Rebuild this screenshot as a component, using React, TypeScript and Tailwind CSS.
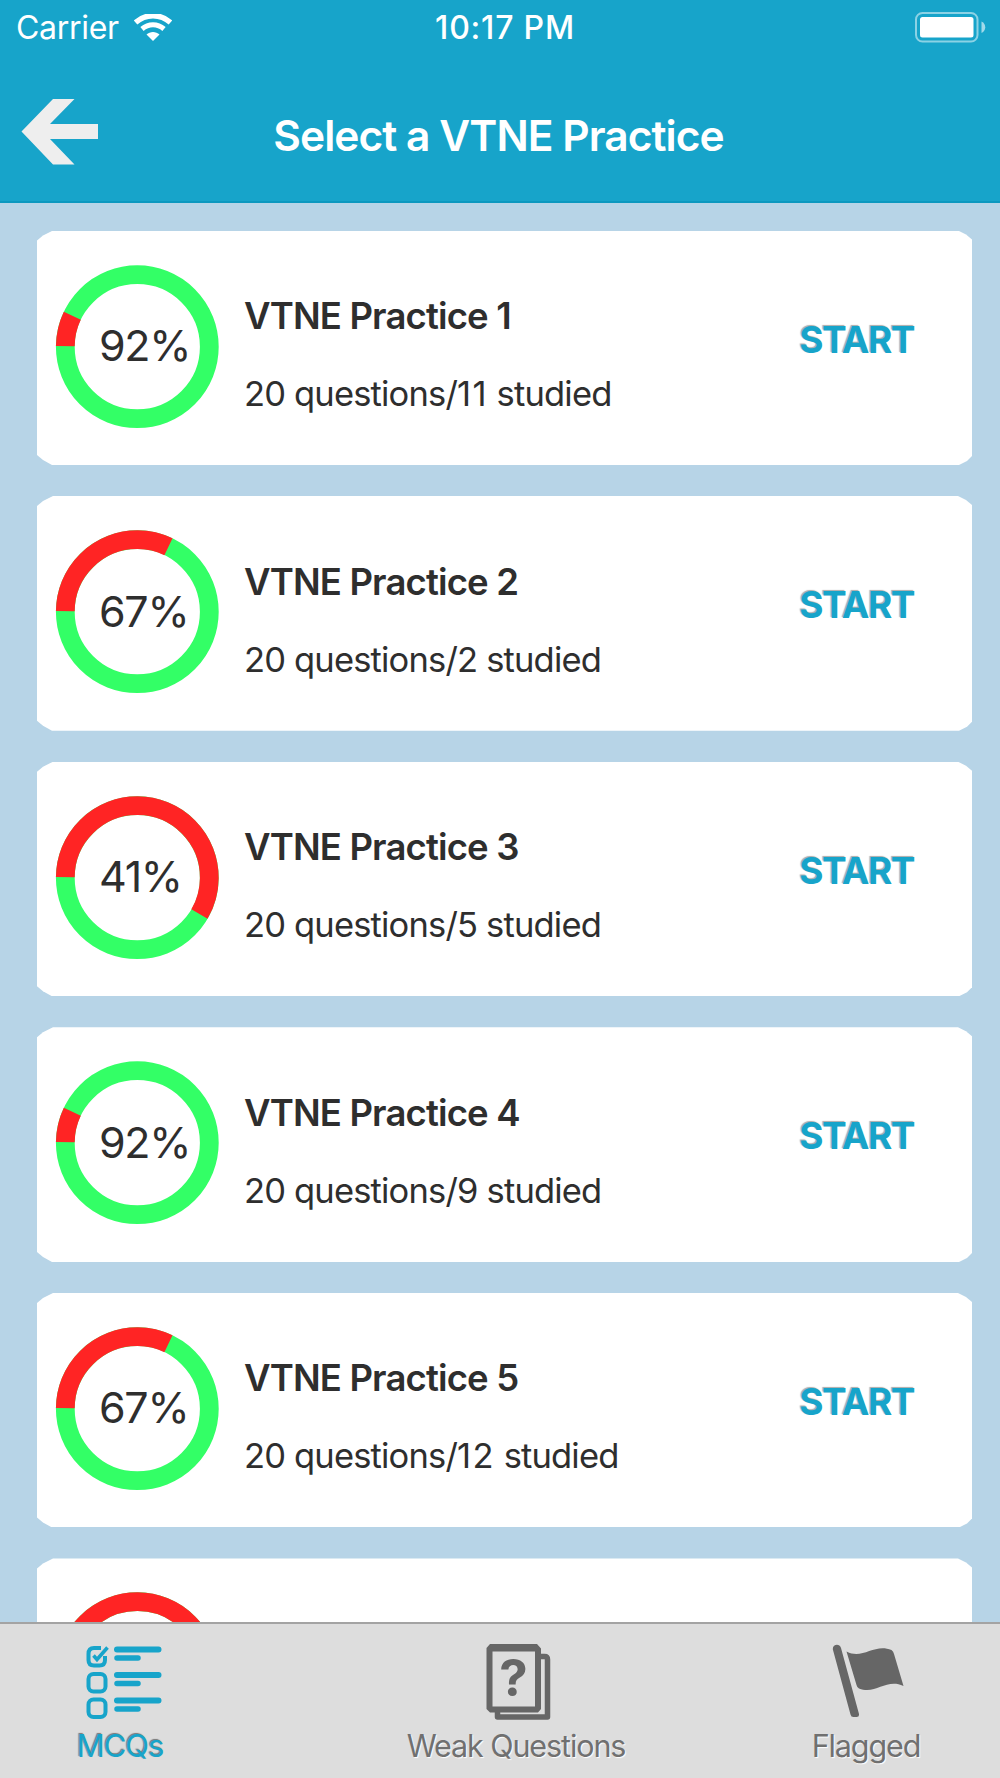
import clsx from "clsx";

const practices = [
    { name: "VTNE Practice 1", score: 92, studied: 11, wrong: 25 },
    { name: "VTNE Practice 2", score: 67, studied: 2, wrong: 115 },
    { name: "VTNE Practice 3", score: 41, studied: 5, wrong: 209.5 },
    { name: "VTNE Practice 4", score: 92, studied: 9, wrong: 25 },
    { name: "VTNE Practice 5", score: 67, studied: 12, wrong: 115 },
];

function StatusBar() {
    return (
        <div className="flex h-[56px] items-center justify-between pl-4 pr-[14px]">
            <div className="flex w-[166px] items-center justify-between pr-[10px]">
                <span className="text-[32px] leading-none tracking-[-0.3px]">Carrier</span>
                <svg width="38" height="28" viewBox="0 0 38 28" fill="none" className="shrink-0">
                    <path d="M1.500 8.500C11.500 -0.500 26.500 -0.500 36.500 8.500" stroke="white" strokeWidth="5.500" />
                    <path d="M8 15C14.500 9.300 23.500 9.300 30 15" stroke="white" strokeWidth="5" />
                    <path d="M19 27L12.500 20.500C16 17 22 17 25.500 20.500Z" fill="white" />
                </svg>
            </div>
            <span className="text-[32px] font-medium leading-none tracking-[0.8px]">10:17 PM</span>
            <div className="flex w-[158px] justify-end">
                <svg width="72" height="32" viewBox="0 0 72 32" fill="none">
                    <rect x="2" y="1" width="61.500" height="28.500" rx="6.500" stroke="white" strokeOpacity="0.5" strokeWidth="2" />
                    <rect x="6" y="5" width="53.500" height="20.500" rx="2.500" fill="white" />
                    <path d="M67.500 9.500C72.500 12 72.500 18.500 67.500 21Z" fill="white" fillOpacity="0.6" />
                </svg>
            </div>
        </div>
    );
}

function Header() {
    return (
        <header className="h-[203px] shrink-0 border-b-2 border-[#0c98bf] bg-[#17a4ca] text-white">
            <StatusBar />
            <div className="grid h-[145px] grid-cols-[120px_1fr_123px] items-start">
                <svg width="78" height="66" viewBox="0 0 78 66" className="ml-[21px] mt-[43px]">
                    <path d="M0.500 32.500L32 0H53.500L29 25H77V40H29L53.500 65.500H32Z" fill="#eeeeee" />
                </svg>
                <h1 className="mt-[54px] text-center text-[42.500px] font-semibold leading-[51px] tracking-[-0.95px] whitespace-nowrap">
                    Select a VTNE Practice
                </h1>
            </div>
        </header>
    );
}

function ScoreRing({ score, wrong }: { score?: number; wrong: number }) {
    const r = 72;
    const length = 2 * Math.PI * r;

    return (
        <div className="grid h-[164px] w-[164px] shrink-0 items-center">
            <svg width="164" height="164" viewBox="0 0 164 164" fill="none" className="col-start-1 row-start-1">
                <circle cx="82.300" cy="81.700" r={r} stroke="#33ff66" strokeWidth="18.800" />
                {/* wrong answers run clockwise from 9 o'clock */}
                <circle
                    cx="82.300"
                    cy="81.700"
                    r={r}
                    stroke="#ff2424"
                    strokeWidth="18.800"
                    strokeDasharray={`${(wrong / 360) * length} ${length}`}
                    transform="rotate(180.500 82.300 81.700)"
                />
            </svg>
            {score !== undefined && (
                <span className="col-start-1 row-start-1 mb-[2px] ml-[44px] text-[43px] font-[370] leading-none tracking-[-1.300px]">
                    {score}%
                </span>
            )}
        </div>
    );
}

const cardShape =
    "shrink-0 bg-white pl-[18px] text-[#2e2e2e] [clip-path:polygon(0_10px,6px_5px,16px_0,calc(100%_-_14px)_0,calc(100%_-_6px)_4px,100%_9px,100%_calc(100%_-_9px),calc(100%_-_5px)_calc(100%_-_4px),calc(100%_-_13px)_100%,15px_100%,6px_calc(100%_-_5px),0_calc(100%_-_10px))]";

function PracticeCard({ name, score, studied, wrong }: (typeof practices)[number]) {
    return (
        <div className={clsx("flex h-[234.600px]", cardShape)}>
            <div className="mt-[34px]">
                <ScoreRing score={score} wrong={wrong} />
            </div>
            <div className="ml-[25px] mt-[63.500px] flex-1">
                <h2 className="text-[36.500px] font-semibold leading-[44px] tracking-[-0.85px]">{name}</h2>
                <p className="mt-[34px] text-[34.500px] leading-[43px] tracking-[-0.82px]">
                    20 questions/<span className={clsx(studied > 9 && "tracking-[1.300px]")}>{studied}</span> studied
                </p>
            </div>
            <button className="mr-[58px] mt-[87px] h-[44px] text-[37px] font-bold leading-[44px] tracking-[-1.500px] text-[#17a4ca] [text-shadow:-1px_-1px_1px_#aaa]">
                START
            </button>
        </div>
    );
}

function McqIcon() {
    return (
        <svg width="76" height="74" viewBox="0 0 76 74" fill="none" stroke="#17a4ca" className="ml-[7px] mt-[0.500px]">
            <path d="M15 3H8Q2.500 3 2.500 9V15Q2.500 20.500 8 20.500H13.500Q19 20.500 19 15V11" strokeWidth="4" />
            <path d="M7.500 10.500L11 14.500L21.500 2.500" strokeWidth="3.500" />
            <rect x="2.500" y="29" width="17" height="17.500" rx="5" strokeWidth="4" />
            <rect x="2.500" y="54.500" width="17" height="17.500" rx="5" strokeWidth="4" />
            <path d="M31 4.500H72.500M31 30H72.500M31 55.500H72.500" strokeWidth="6" strokeLinecap="round" />
            <path d="M31 13H52M31 38.500H52M31 64H52" strokeWidth="5.500" strokeLinecap="round" />
        </svg>
    );
}

function WeakIcon() {
    return (
        <svg width="65" height="77" viewBox="0 0 65 77" fill="none" className="ml-[5px]">
            <path d="M55 12.500H58.500Q61.500 12.500 61.500 15.500V73H11.500V67" stroke="#666666" strokeWidth="5.500" strokeLinejoin="round" />
            <path
                d="M4 0H51L55 4.500V65L52 68.500H4L0.500 65V4ZM6.500 7.500V62.500H49V7.500Z"
                fill="#666666"
                fillRule="evenodd"
            />
            <text x="27.500" y="52" textAnchor="middle" fill="#666666" className="text-[51px] font-bold">
                ?
            </text>
        </svg>
    );
}

function FlagIcon() {
    return (
        <svg width="72" height="74" viewBox="0 0 72 74" fill="#666666" className="ml-[4px]">
            <path d="M1 6C-0.500 0.500 7.500 -1.500 9 4L27 70Q27.500 73 24.500 73H21.500Q19 73 18.500 70.500Z" />
            <path d="M14.500 7.500C31 16 42 -1 59.500 6Q61.500 7.500 62 10L71.500 42C54 34 44 51 27 44.500Q25 43.500 24.500 41Z" />
        </svg>
    );
}

const tabs = [
    { label: "MCQs", icon: <McqIcon />, active: true },
    { label: "Weak Questions", icon: <WeakIcon />, active: false },
    { label: "Flagged", icon: <FlagIcon />, active: false },
];

function TabBar() {
    return (
        <nav className="grid h-[156px] shrink-0 grid-cols-[240px_552px_148px] border-t-2 border-[#a3a3a3] bg-[#dddddd]">
            {tabs.map((tab) => (
                <div key={tab.label} className="flex flex-col items-center">
                    <div className="mt-[20px] flex h-[78px] items-start">{tab.icon}</div>
                    <span
                        className={clsx(
                            "mt-1 whitespace-nowrap leading-[40px]",
                            tab.active
                                ? "text-[31px] tracking-[-1px] text-[#17a4ca] [text-shadow:-1px_-1px_1px_#777]"
                                : "text-[30.500px] tracking-[-1.100px] text-[#707070] [text-shadow:1px_1px_1px_#fff]",
                        )}
                    >
                        {tab.label}
                    </span>
                </div>
            ))}
        </nav>
    );
}

export default function App() {
    return (
        <div className="flex h-[1778px] w-[1000px] flex-col overflow-hidden bg-[#b7d4e7] font-['Inter','Liberation_Sans',sans-serif]">
            <Header />
            <main className="flex min-h-0 flex-1 flex-col gap-[31px] overflow-hidden pl-[37px] pr-[28px] pt-[27.500px]">
                {practices.map((practice) => (
                    <PracticeCard key={practice.name} {...practice} />
                ))}
                {/* next card, only its top shows above the tab bar */}
                <div className={clsx("h-[234.600px] pt-[34px]", cardShape)}>
                    <ScoreRing wrong={209.5} />
                </div>
            </main>
            <TabBar />
        </div>
    );
}
